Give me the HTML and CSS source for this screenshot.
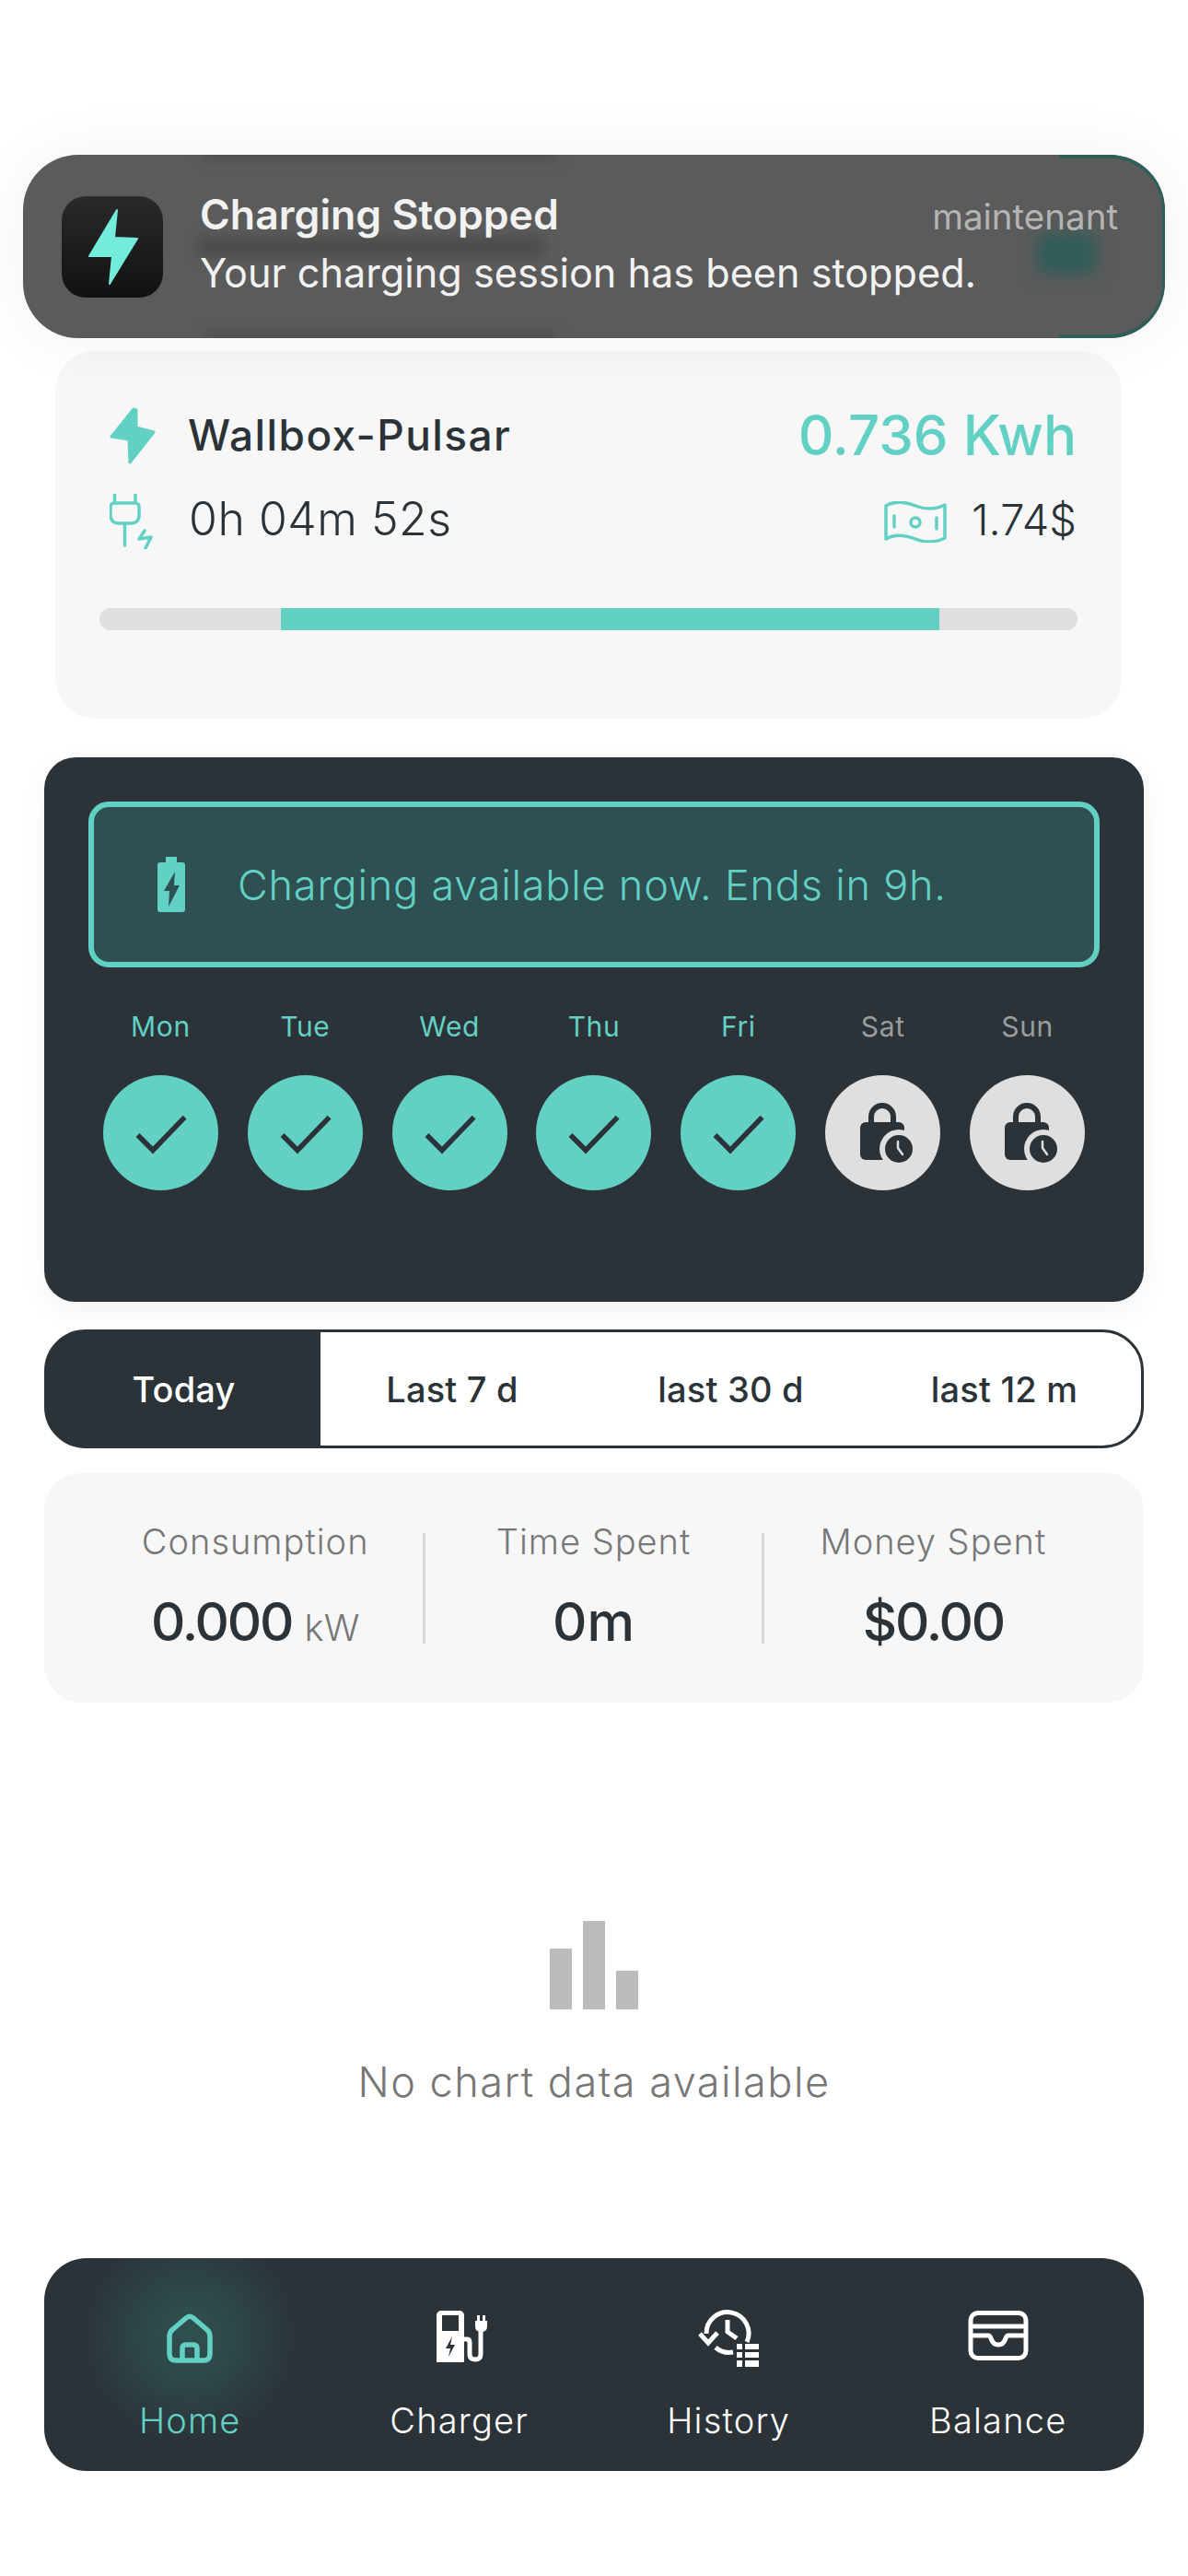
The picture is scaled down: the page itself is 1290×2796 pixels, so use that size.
FILE: index.html
```html
<!DOCTYPE html>
<html lang="en">
<head>
<meta charset="utf-8">
<title>Wallbox</title>
<link rel="stylesheet" href="styles.css">
</head>
<body>
<main class="page">
  <section class="session">
    <div class="session-row first">
      <svg class="ico" viewBox="0 0 50 62" width="50" height="62"><path class="solid" d="M26 2 2 32l19 3 1 25 26-33-19-5V3z"/></svg>
      <span class="name">Wallbox-Pulsar</span>
      <span class="energy">0.736 Kwh</span>
    </div>
    <div class="session-row second">
      <svg class="ico" viewBox="0 0 50 60" width="50" height="60"><path class="line" d="M5.5 1v9M28 1v9M5 10h23a4 4 0 0 1 4 4v10a8 8 0 0 1-8 8H9a8 8 0 0 1-8-8V14a4 4 0 0 1 4-4zM16.500 32v24M38 40l-6 9 13-2-6 12"/></svg>
      <span class="time">0h 04m 52s</span>
      <svg class="money" viewBox="0 0 68 45" width="68" height="45"><path class="line" d="M2 5C12-1 24 1 34 5s22 4 32-1v36c-10 5-22 5-32 1S12 35 2 41zM11 16v12M57 18v12"/><circle class="line" cx="34" cy="23" r="5"/></svg>
      <span class="cost">1.74$</span>
    </div>
    <div class="progress"><div class="progress-fill"></div></div>
  </section>

  <section class="schedule">
    <div class="banner">
      <svg viewBox="0 0 30 60" width="30" height="60"><path class="battery" d="M9 0h12v6h6a3 3 0 0 1 3 3v48a3 3 0 0 1-3 3H3a3 3 0 0 1-3-3V9a3 3 0 0 1 3-3h6z"/><path class="battery-bolt" d="M19 16 7 37h6l-1 17 12-23h-6z"/></svg>
      <span>Charging available now. Ends in 9h.</span>
    </div>
    <div class="days">
      <div class="day"><span class="day-name">Mon</span><svg class="day-dot" viewBox="0 0 125 125"><circle class="on" cx="62.500" cy="62.500" r="62.500"/><path class="tick" d="m37.500 65 16.500 16.500L88.600 45.600"/></svg></div>
      <div class="day"><span class="day-name">Tue</span><svg class="day-dot" viewBox="0 0 125 125"><circle class="on" cx="62.500" cy="62.500" r="62.500"/><path class="tick" d="m37.500 65 16.500 16.500L88.600 45.600"/></svg></div>
      <div class="day"><span class="day-name">Wed</span><svg class="day-dot" viewBox="0 0 125 125"><circle class="on" cx="62.500" cy="62.500" r="62.500"/><path class="tick" d="m37.500 65 16.500 16.500L88.600 45.600"/></svg></div>
      <div class="day"><span class="day-name">Thu</span><svg class="day-dot" viewBox="0 0 125 125"><circle class="on" cx="62.500" cy="62.500" r="62.500"/><path class="tick" d="m37.500 65 16.500 16.500L88.600 45.600"/></svg></div>
      <div class="day"><span class="day-name">Fri</span><svg class="day-dot" viewBox="0 0 125 125"><circle class="on" cx="62.500" cy="62.500" r="62.500"/><path class="tick" d="m37.500 65 16.500 16.500L88.600 45.600"/></svg></div>
      <div class="day off"><span class="day-name">Sat</span><svg class="day-dot" viewBox="0 0 125 125"><circle class="lock-bg" cx="62.500" cy="62.500" r="62.500"/><path class="shackle" d="M50 52v-7a12 12 0 0 1 24 0v7"/><rect class="lock-body" x="38" y="51" width="48" height="41" rx="6"/><circle class="lock-bg" cx="80" cy="80" r="21"/><circle class="lock-body" cx="80" cy="80" r="15"/><path class="hand" d="M79 72v7l5 7"/></svg></div>
      <div class="day off"><span class="day-name">Sun</span><svg class="day-dot" viewBox="0 0 125 125"><circle class="lock-bg" cx="62.500" cy="62.500" r="62.500"/><path class="shackle" d="M50 52v-7a12 12 0 0 1 24 0v7"/><rect class="lock-body" x="38" y="51" width="48" height="41" rx="6"/><circle class="lock-bg" cx="80" cy="80" r="21"/><circle class="lock-body" cx="80" cy="80" r="15"/><path class="hand" d="M79 72v7l5 7"/></svg></div>
    </div>
  </section>

  <nav class="tabs">
    <span class="tab active">Today</span>
    <span class="tab">Last 7 d</span>
    <span class="tab">last 30 d</span>
    <span class="tab">last 12 m</span>
  </nav>

  <section class="stats">
    <div class="stat"><span class="stat-label">Consumption</span><span class="stat-value narrow">0.000 <small>kW</small></span></div>
    <div class="stat"><span class="stat-label">Time Spent</span><span class="stat-value">0m</span></div>
    <div class="stat"><span class="stat-label">Money Spent</span><span class="stat-value narrow">$0.00</span></div>
  </section>

  <section class="empty">
    <div class="bars"><i class="bar b1"></i><i class="bar b2"></i><i class="bar b3"></i></div>
    <p class="empty-text">No chart data available</p>
  </section>

  <nav class="bottom">
    <div class="item current">
      <svg viewBox="0 0 50 64" width="50" height="64"><path class="home" d="M3 31q0-5 4-8L21 11q4-3.500 8 0l14 12q4 3 4 8v19q0 7-7 7H10q-7 0-7-7zM17 57V44q0-4 4-4h8q4 0 4 4v13"/></svg>
      <span>Home</span>
    </div>
    <div class="item">
      <svg class="charger-ico" viewBox="0 0 56 64" width="56" height="64"><path class="white" fill-rule="evenodd" d="M5 3h20a5 5 0 0 1 5 5v50a1 1 0 0 1-1 1H1a1 1 0 0 1-1-1V8a5 5 0 0 1 5-5zM6 8v17h18V8zm11 23-7 13h5l-2 9 7-13h-5l2-9z"/><path class="wire" d="M30 34h3q3 0 3 4v12q0 6 6 6t6-6V26"/><path class="white" d="M42 14h13v6q0 6-6.500 6T42 20zM44 8h3v7h-3zM50 8h3v7h-3z"/></svg>
      <span>Charger</span>
    </div>
    <div class="item">
      <svg viewBox="0 0 66 64" width="66" height="64"><path class="wire" d="M9 28a23 23 0 1 1 44 9M19 43a23 23 0 0 0 19 5M2 28l9 10 10-11M32 13v13l10 7"/><path class="white" d="M42 39h6v6h-6zM51 39h15v6H51zM42 48h6v6h-6zM51 48h15v6H51zM42 57h6v7h-6zM51 57h15v7H51z"/></svg>
      <span>History</span>
    </div>
    <div class="item">
      <svg viewBox="0 0 66 64" width="66" height="64"><path class="wire" d="M11 5.500h44a8 8 0 0 1 8 8v33a8 8 0 0 1-8 8H11a8 8 0 0 1-8-8v-33a8 8 0 0 1 8-8zM3 20h60M3 30h19q2 0 3 3 2 7 8 7t8-7q1-3 3-3h19"/></svg>
      <span>Balance</span>
    </div>
  </nav>
</main>

<aside class="toast">
  <i class="smear s1"></i><i class="smear s2"></i><i class="smear s3"></i><i class="smear s4"></i><i class="tint"></i>
  <div class="toast-icon">
    <svg viewBox="0 0 110 110" width="110" height="110"><path class="toast-bolt" d="M60 15 57 45 82 46 52 95 55 65 30 65z"/></svg>
  </div>
  <div class="toast-body">
    <div class="toast-head"><strong>Charging Stopped</strong><span>maintenant</span></div>
    <p>Your charging session has been stopped.</p>
  </div>
</aside>
</body>
</html>
```
FILE: styles.css
```css
* { box-sizing: border-box; }
html, body { margin: 0; padding: 0; background: #fff; }
body {
  position: relative;
  width: 1290px;
  height: 2796px;
  overflow: hidden;
  font-family: Inter, "Liberation Sans", sans-serif;
  color: #2b3338;
}
p { margin: 0; }

.page { padding: 381px 48px 0; }

/* session */
.session {
  margin: 0 24px 0 12px;
  height: 399px;
  padding: 61px 48px 0;
  background: #f7f7f7;
  border-radius: 44px;
}
.session-row { display: flex; align-items: center; padding-left: 11px; }
.session-row.first { height: 62px; }
.session-row.second { height: 60px; margin-top: 32px; }
.ico { flex: none; margin-right: 35px; }
.solid { fill: #62d0c3; stroke: #62d0c3; stroke-width: 3; stroke-linejoin: round; }
.line { fill: none; stroke: #62d0c3; stroke-width: 3.500; stroke-linecap: round; stroke-linejoin: round; }
.name { font-size: 46px; font-weight: 500; letter-spacing: 1.400px; margin-bottom: 3px; }
.energy { margin-left: auto; margin-right: 1px; margin-bottom: 3px; font-size: 60px; font-weight: 500; color: #62d0c3; line-height: 1; }
.time { font-size: 50px; font-weight: 300; letter-spacing: .5px; margin-bottom: 6px; margin-left: 1px; }
.money { margin-left: auto; margin-right: 27px; }
.cost { margin-right: 1px; margin-bottom: 6px; font-size: 47px; font-weight: 300; }
.progress {
  margin-top: 64px;
  height: 24px;
  border-radius: 12px;
  background: #dfdfdf;
  overflow: hidden;
}
.progress-fill { margin-left: 197px; width: 715px; height: 100%; background: #62d0c3; }

/* schedule */
.schedule {
  margin-top: 42px;
  height: 591px;
  padding: 48px 48px 0;
  background: #2b3338;
  border-radius: 34px;
  box-shadow: 0 10px 30px rgba(0,0,0,.05);
}
.banner {
  display: flex;
  align-items: center;
  gap: 57px;
  height: 180px;
  padding-left: 69px;
  border: 6px solid #5fd0c2;
  border-radius: 22px;
  background: #2f5052;
  color: #62d0c3;
  font-size: 45px;
  font-weight: 300;
  letter-spacing: .8px;
}
.battery { fill: #62d0c3; }
.battery-bolt { fill: #2f5052; }
.days { display: grid; grid-template-columns: repeat(7, 1fr); margin-top: 44px; }
.day { display: flex; flex-direction: column; align-items: center; gap: 33px; }
.day-name { height: 40px; line-height: 41px; font-size: 30px; font-weight: 400; letter-spacing: .6px; color: #62d0c3; }
.off .day-name { color: #9a9d9f; }
.day-dot { width: 125px; height: 125px; display: block; }
.on { fill: #62d0c3; }
.tick { fill: none; stroke: #2b3338; stroke-width: 5.500; }
.lock-bg { fill: #dfdfdf; }
.lock-body { fill: #2b3338; }
.shackle { fill: none; stroke: #2b3338; stroke-width: 6; }
.hand { fill: none; stroke: #dfdfdf; stroke-width: 2.500; stroke-linecap: round; stroke-linejoin: round; }

/* tabs */
.tabs {
  display: grid;
  grid-template-columns: 297px 286px 319px 275px;
  margin-top: 30px;
  height: 129px;
  border: 3px solid #2b3338;
  border-radius: 45px;
  background: linear-gradient(90deg, #2b3338 297px, #fff 297px);
}
.tab {
  display: flex;
  align-items: center;
  justify-content: center;
  font-size: 38px;
  font-weight: 500;
  letter-spacing: .2px;
}
.tab.active { color: #fff; }

/* stats */
.stats {
  display: grid;
  grid-template-columns: repeat(3, 1fr);
  align-items: center;
  margin-top: 27px;
  height: 249px;
  padding: 0 45px 0 47px;
  background: #f7f7f7;
  border-radius: 40px;
}
.stat {
  display: flex;
  flex-direction: column;
  align-items: center;
  height: 120px;
  border-right: 3px solid #d9d9d9;
}
.stat:last-child { border-right: 0; }
.stat-label { height: 24px; margin-top: -3px; line-height: 24px; font-size: 38px; font-weight: 300; color: #777; letter-spacing: 1px; }
.stat-value { margin-top: 51px; height: 48px; line-height: 48px; font-size: 58px; font-weight: 500; white-space: nowrap; }
.stat-value.narrow { letter-spacing: -2.200px; }
.stat-value small { font-size: 40px; font-weight: 300; color: #777; letter-spacing: 0; }

/* empty */
.empty { display: flex; flex-direction: column; align-items: center; margin-top: 237px; }
.bars { display: flex; align-items: flex-end; gap: 12px; height: 96px; }
.bar { display: block; width: 24px; background: #bbb; }
.b1 { height: 66px; }
.b2 { height: 96px; }
.b3 { height: 42px; }
.empty-text { margin-top: 54px; height: 50px; line-height: 50px; font-size: 45px; font-weight: 300; letter-spacing: 1.500px; color: #777; }

/* bottom nav */
.bottom {
  display: grid;
  grid-template-columns: repeat(4, 1fr);
  margin-top: 166px;
  height: 231px;
  padding: 54px 12px 0;
  border-radius: 46px;
  background: radial-gradient(circle 118px at 158px 84px, #2f504e 0%, #2e4a4a 35%, #2b3338 100%) #2b3338;
  color: #fff;
}
.item { display: flex; flex-direction: column; align-items: center; gap: 36px; font-size: 38px; font-weight: 300; letter-spacing: 1.200px; line-height: 44px; }
.item.current { color: #62d0c3; }
.charger-ico { margin-left: 6px; }
.home { fill: none; stroke: #62d0c3; stroke-width: 5.500; stroke-linejoin: round; }
.white { fill: #fff; }
.wire { fill: none; stroke: #fff; stroke-width: 5; }

/* notification */
.toast {
  position: absolute;
  left: 25px;
  top: 168px;
  width: 1240px;
  height: 199px;
  display: flex;
  align-items: center;
  overflow: hidden;
  border-radius: 60px;
  background: #5b5b5b;
  box-shadow: 0 0 70px rgba(0,0,0,.06);
  color: #f2f2f2;
}
.smear { position: absolute; background: #4e4e4e; filter: blur(6px); }
.s1 { left: 195px; top: -7px; width: 385px; height: 12px; }
.s2 { left: 195px; bottom: -7px; width: 385px; height: 12px; }
.s3 { left: 190px; top: 90px; width: 375px; height: 20px; background: #4c4c4c; }
.s4 { left: 1102px; top: 85px; width: 62px; height: 44px; background: #2f5c58; filter: blur(9px); }
.tint { position: absolute; inset: 0; border-radius: 60px; border: solid #2f5f5b; border-width: 4px 3px 4px 0; clip-path: inset(0 0 0 1125px); }
.toast-icon {
  position: relative;
  flex: none;
  width: 110px;
  height: 110px;
  margin-left: 42px;
  border-radius: 26px;
  background: linear-gradient(#2a2a2a, #111);
}
.toast-icon svg { display: block; }
.toast-bolt { fill: #74ecdc; stroke: #74ecdc; stroke-width: 2; stroke-linejoin: round; }
.toast-body { position: relative; flex: 1; margin-left: 40px; padding-right: 51px; margin-top: -7px; }
.toast-head { display: flex; align-items: baseline; justify-content: space-between; }
.toast-head strong { font-size: 44.600px; font-weight: 600; line-height: 60px; }
.toast-head span { font-size: 38.500px; font-weight: 400; color: #b4b4b4; }
.toast-body p { font-size: 43.200px; font-weight: 400; line-height: 60px; margin-top: 3px; white-space: nowrap; }
```
